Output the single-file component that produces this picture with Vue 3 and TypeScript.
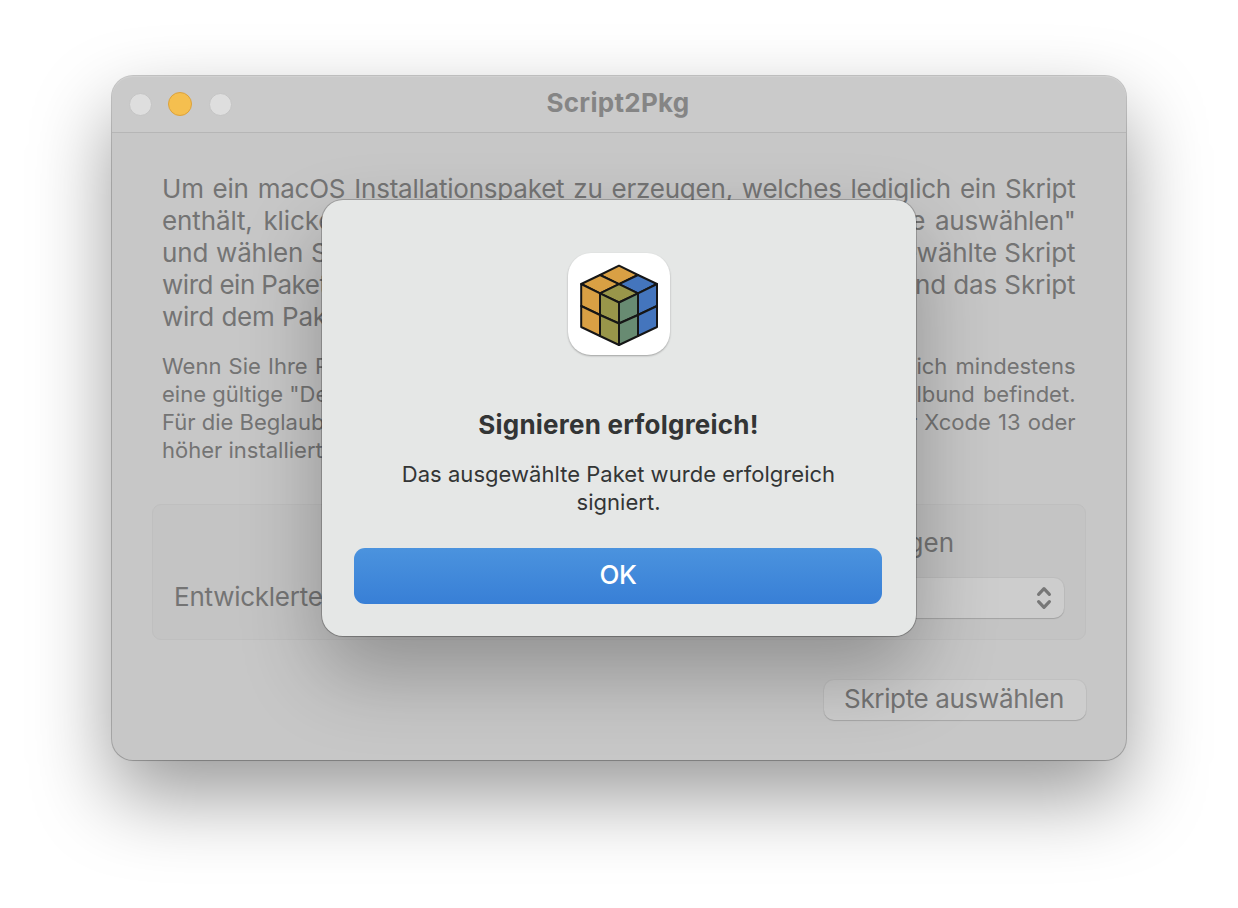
<script setup lang="ts">
interface SplitLine {
  left: string
  right?: string
  cls: string
}

const intro: SplitLine[] = [
  { left: 'Um ein macOS Installationspaket zu erzeugen, welches lediglich ein Skript', cls: 'i1' },
  { left: 'enthält, klicken', right: 'Skripte auswählen"', cls: 'i2' },
  { left: 'und wählen Sie', right: 'ausgewählte Skript', cls: 'i3' },
  { left: 'wird ein Paket', right: 'und das Skript', cls: 'i4' },
  { left: 'wird dem Paket', cls: 'i5' },
]

const notes: SplitLine[] = [
  { left: 'Wenn Sie Ihre Pakete', right: 'sich mindestens', cls: 'n1' },
  { left: 'eine gültige "Developer', right: 'Schlüsselbund befindet.', cls: 'n2' },
  { left: 'Für die Beglaubigung', right: 'oder Xcode 13 oder', cls: 'n3' },
  { left: 'höher installiert', cls: 'n4' },
]
</script>

<template>
  <main class="desktop">
    <section class="window">
      <header class="titlebar">
        <div class="lights">
          <i class="light"></i>
          <i class="light amber"></i>
          <i class="light"></i>
        </div>
        <h1 class="title"><span>Script2Pkg</span></h1>
      </header>
      <div class="body">
        <div class="intro">
          <div v-for="line in intro" :key="line.cls" class="line" :class="line.cls">
            <span class="l">{{ line.left }}</span>
            <span v-if="line.right" class="r">{{ line.right }}</span>
          </div>
        </div>
        <div class="notes">
          <div v-for="line in notes" :key="line.cls" class="line" :class="line.cls">
            <span class="l">{{ line.left }}</span>
            <span v-if="line.right" class="r">{{ line.right }}</span>
          </div>
        </div>
        <div class="group">
          <div class="check-row"><span>beglaubigen</span></div>
          <div class="id-row">
            <label>Entwicklerteam:</label>
            <div class="popup">
              <svg width="16" height="24" viewBox="0 0 16 24" fill="none" stroke="#777" stroke-width="3.2" stroke-linecap="round" stroke-linejoin="round">
                <path d="M2.6 8.3 8 2.7l5.4 5.6M2.6 15.7 8 21.3l5.4-5.6" />
              </svg>
            </div>
          </div>
        </div>
        <div class="actions">
          <button class="push"><span>Skripte auswählen</span></button>
        </div>
      </div>
    </section>

    <section class="dialog" role="alertdialog">
      <div class="app-icon">
        <svg width="102" height="102" viewBox="0 0 102 102" stroke="#161616" stroke-width="2" stroke-linejoin="round">
          <path fill="#d9a044" d="M51 12.7 70 22 51 31.2 32 22z" />
          <path fill="#d9a044" d="M32 22 51 31.2 32 40.3 13.2 31z" />
          <path fill="#4475bd" d="M70 22 89 31 70 40.3 51 31.2z" />
          <path fill="#99964a" d="M51 31.2 70 40.3 51 49.5 32 40.3z" />
          <path fill="#d9a044" d="M13.2 31 32 40.3V62L13.2 53z" />
          <path fill="#d9a044" d="M13.2 53 32 62V83L13.2 74z" />
          <path fill="#99964a" d="M32 40.3 51 49.5V70.5L32 62z" />
          <path fill="#99964a" d="M32 62 51 70.5V92L32 83z" />
          <path fill="#688b72" d="M51 49.5 70 40.3V62L51 70.5z" />
          <path fill="#688b72" d="M51 70.5 70 62V83L51 92z" />
          <path fill="#4475bd" d="M70 40.3 89 31V53L70 62z" />
          <path fill="#4475bd" d="M70 62 89 53V74L70 83z" />
        </svg>
      </div>
      <h2 class="headline"><span>Signieren erfolgreich!</span></h2>
      <p class="message"><span>Das ausgewählte Paket wurde erfolgreich</span><br /><span>signiert.</span></p>
      <button class="ok"><span>OK</span></button>
    </section>
  </main>
</template>

<style>
html,
body {
  margin: 0;
  background: #fff;
}
</style>

<style scoped>
* {
  box-sizing: border-box;
}
.desktop {
  position: relative;
  width: 1238px;
  height: 908px;
  padding: 76px 112px 0;
  overflow: hidden;
  background: #fff;
  font-family: Inter, 'Liberation Sans', sans-serif;
  color: #747474;
}
.window {
  width: 1014px;
  height: 684px;
  border-radius: 21px;
  background: #c7c7c7;
  box-shadow:
    0 0 0 1px rgba(0, 0, 0, 0.2),
    0 1px 1px rgba(0, 0, 0, 0.08),
    0 36px 80px rgba(0, 0, 0, 0.4);
}
.titlebar {
  display: grid;
  grid-template-columns: 200px 1fr 200px;
  height: 57px;
  border-bottom: 1px solid #b6b6b6;
  border-radius: 21px 21px 0 0;
  background: #cacaca;
  box-shadow: inset 0 1px 0 #d1d1d1;
}
.lights {
  display: flex;
  gap: 17px;
  padding: 16.5px 0 0 16.5px;
}
.light {
  width: 23px;
  height: 23px;
  border: 1px solid #c4c4c4;
  border-radius: 50%;
  background: #dedede;
}
.light.amber {
  width: 24px;
  height: 24px;
  margin: -0.5px;
  border-color: #dca23c;
  background: #f5bf4f;
}
.title {
  margin: 0;
  text-align: center;
  font-size: 26px;
  font-weight: 700;
  letter-spacing: 0.3px;
  line-height: 54px;
  color: #858585;
}
.title span {
  margin-right: 2px;
}
.body {
  display: flex;
  flex-direction: column;
  padding: 40px 40px 0;
}
.intro,
.notes {
  padding: 0 10.5px 0 10px;
}
.line {
  display: flex;
  justify-content: space-between;
  white-space: nowrap;
}
.intro .line {
  height: 32px;
  font-size: 26px;
  line-height: 32px;
  letter-spacing: -0.12px;
}
.notes {
  margin-top: 19px;
}
.notes .line {
  height: 28px;
  font-size: 22px;
  line-height: 28px;
}
.intro .i1 {
  letter-spacing: -0.22px;
}
.i1 .l {
  width: 100%;
  text-align-last: justify;
  white-space: normal;
}
.i2 .l {
  word-spacing: 3.5px;
}
.i2 .r {
  letter-spacing: -0.35px;
  word-spacing: 3px;
}
.i3 .l {
  letter-spacing: -0.12px;
  word-spacing: 0.5px;
}
.i4 .l {
  letter-spacing: -0.45px;
  word-spacing: -0.5px;
}
.i5 .l {
  letter-spacing: -0.25px;
  word-spacing: 0.5px;
}
.n1 .l {
  word-spacing: 1px;
}
.n1 .r,
.n2 .r {
  word-spacing: 2px;
}
.n3 .r {
  word-spacing: 1px;
}
.group {
  height: 136px;
  margin-top: 40px;
  padding: 22px 21px 0;
  border: 1px solid #bfbfbf;
  border-radius: 9px;
  background: #c4c4c4;
  font-size: 26px;
}
.check-row {
  height: 32px;
  padding-right: 110px;
  text-align: right;
  line-height: 32px;
}
.id-row {
  display: flex;
  justify-content: space-between;
  margin-top: 19px;
}
.id-row label {
  letter-spacing: -0.25px;
  line-height: 38px;
}
.popup {
  display: flex;
  align-items: center;
  justify-content: flex-end;
  width: 640px;
  height: 40px;
  padding-right: 12px;
  border-radius: 10px;
  background: #cdcdcd;
  box-shadow: 0 0 0 1px rgba(0, 0, 0, 0.03), 0 1px 1px rgba(0, 0, 0, 0.14);
}
.actions {
  display: flex;
  justify-content: flex-end;
  margin-top: 40px;
}
.push {
  width: 262px;
  height: 40px;
  padding: 0 2px 2px 0;
  border: 0;
  border-radius: 10px;
  background: #cdcdcd;
  box-shadow: 0 0 0 1px rgba(0, 0, 0, 0.03), 0 1px 1px rgba(0, 0, 0, 0.14);
  font: 26px/38px Inter, 'Liberation Sans', sans-serif;
  letter-spacing: -0.35px;
  color: #747474;
  white-space: nowrap;
}
.dialog {
  position: absolute;
  left: 322px;
  top: 200px;
  display: flex;
  flex-direction: column;
  align-items: center;
  width: 594px;
  height: 436px;
  padding: 53px 32px 0;
  border-radius: 21px;
  background: #e5e7e6;
  color: #333535;
  box-shadow:
    0 0 0 1px rgba(0, 0, 0, 0.2),
    0 1px 1px rgba(0, 0, 0, 0.1),
    0 36px 80px rgba(0, 0, 0, 0.28);
}
.app-icon {
  width: 102px;
  height: 102px;
  border-radius: 23px;
  background: #fff;
  box-shadow: 0 1px 2px rgba(0, 0, 0, 0.3);
}
.app-icon svg {
  display: block;
}
.headline {
  margin: 54px 1px 0 0;
  font-size: 26px;
  font-weight: 700;
  letter-spacing: 0.23px;
  line-height: 32px;
  white-space: nowrap;
}
.message {
  margin: 19px 1px 0 0;
  text-align: center;
  font-size: 22px;
  letter-spacing: 0.03px;
  line-height: 28px;
  white-space: nowrap;
}
.ok {
  align-self: flex-start;
  width: 528px;
  height: 56px;
  margin-top: 32px;
  padding: 0 0 2px;
  border: 0;
  border-radius: 11px;
  background: linear-gradient(#4b93de, #387fd6);
  font: 500 26px/54px Inter, 'Liberation Sans', sans-serif;
  letter-spacing: -0.4px;
  color: #fff;
}
</style>
